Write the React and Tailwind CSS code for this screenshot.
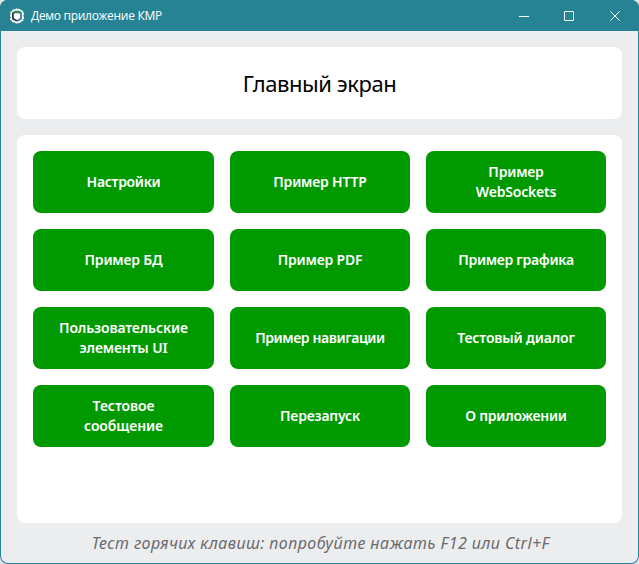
const buttons = [
  { lines: ['Настройки'], tracking: 'tracking-[-0.3px]' },
  { lines: ['Пример HTTP'], tracking: 'tracking-[-0.2px]' },
  { lines: ['Пример', 'WebSockets'], tracking: 'tracking-[-0.2px]' },
  { lines: ['Пример БД'], tracking: 'tracking-[-0.2px]' },
  { lines: ['Пример PDF'], tracking: 'tracking-[-0.2px]' },
  { lines: ['Пример графика'], tracking: 'tracking-[-0.3px]' },
  { lines: ['Пользовательские', 'элементы UI'], tracking: 'tracking-[-0.15px]' },
  { lines: ['Пример навигации'], tracking: 'tracking-[-0.42px]' },
  { lines: ['Тестовый диалог'], tracking: 'tracking-[-0.15px]' },
  { lines: ['Тестовое', 'сообщение'], tracking: 'tracking-[-0.1px]' },
  { lines: ['Перезапуск'], tracking: 'tracking-[-0.2px]' },
  { lines: ['О приложении'], tracking: 'tracking-[-0.25px]' },
];

function AppIcon() {
  return (
    <svg width="16" height="16" viewBox="0 0 16 16" fill="none">
      <path d="M8 .3 11.8 1.6 14.9 4v8l-3.1 2.4L8 15.7l-3.8-1.3L1.1 12V4l3.1-2.4Z" fill="#fff" />
      <path d="M8 .6 11.8 1.8 14.5 4v8l-2.7 2.2L8 15.4l-3.8-1.2L1.5 12V4l2.7-2.2Z" stroke="#284858" strokeWidth=".7" strokeDasharray="1 2.6" />
      <path d="M3.9 4.6v6.2L8 12.9" stroke="#102434" strokeWidth="1.6" />
      <path d="M12 5.2v5.6L8 12.9" stroke="#2f659f" strokeWidth="1.6" />
      <path d="M3.4 4.9 6.4 3.6h3.4l2.8 1.5" stroke="#1b8f50" strokeWidth="1.7" />
      <path d="m5.4 5.6 1-.8h3.4l1.2.8" stroke="#102434" strokeWidth=".7" />
    </svg>
  );
}

function TitleBar() {
  return (
    <header className="flex h-[31px] shrink-0 items-center bg-[#268393] pl-[9px] text-white">
      <AppIcon />
      <span className="ml-1.5 flex-1 font-['Open_Sans','Noto_Sans',sans-serif] text-[12px] leading-4 tracking-[-0.3px] whitespace-nowrap">
        Демо приложение КМР
      </span>
      <svg className="mr-[18px]" width="102" height="10" viewBox="0 0 102 10" fill="none" stroke="#fff">
        <path d="M0 5.5h10" />
        <rect x="45.5" y=".5" width="9" height="9" rx=".5" />
        <path d="m91.3.3 9.4 9.4m0-9.4-9.4 9.4" />
      </svg>
    </header>
  );
}

export default function App() {
  return (
    <div className="h-[564px] w-[639px] overflow-hidden bg-[#dfe3e5]">
      <div className="flex h-full flex-col overflow-hidden rounded-lg bg-[#268393] px-px pb-px font-['Noto_Sans',sans-serif]">
        <div className="-mx-px">
          <TitleBar />
        </div>
        <main className="flex flex-1 flex-col overflow-hidden rounded-b-[7px] bg-[#ecedef] px-4 pt-4">
          <section className="flex h-[72px] items-center justify-center rounded-lg bg-white">
            <h1 className="text-[22px] leading-7 tracking-[-0.45px] text-black">Главный экран</h1>
          </section>
          <section className="mt-4 h-[388px] rounded-lg bg-white p-4">
            <div className="grid grid-cols-[181px_180px_180px] gap-4">
              {buttons.map(({ lines, tracking }) => (
                <button
                  key={lines.join(' ')}
                  className="flex h-[62px] flex-col items-center justify-center rounded-lg bg-[#009900] text-[14px] leading-5 font-semibold text-white"
                >
                  {lines.map((line) => (
                    <span key={line} className={tracking}>{line}</span>
                  ))}
                </button>
              ))}
            </div>
          </section>
          <footer className="flex flex-1 items-center justify-center pl-0.5">
            <p className="text-[16px] leading-5 tracking-[0.44px] whitespace-nowrap text-[#6b6c6e] italic">
              Тест горячих клавиш: попробуйте нажать F12 или Ctrl+F
            </p>
          </footer>
        </main>
      </div>
    </div>
  );
}
